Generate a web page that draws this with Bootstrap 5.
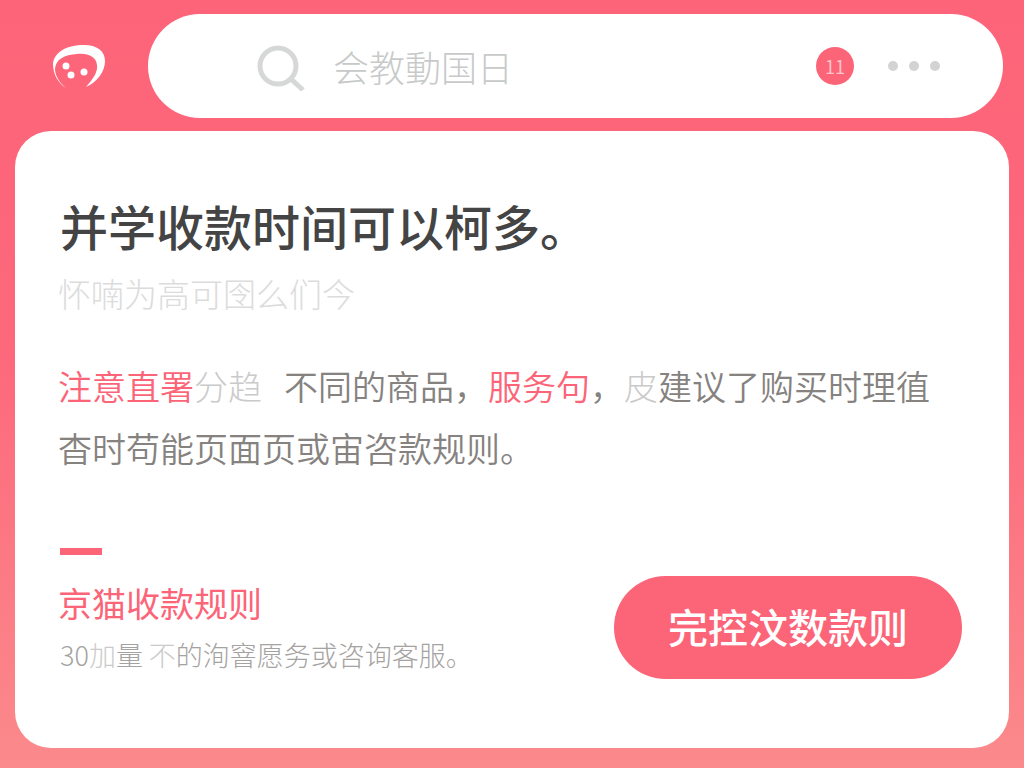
<!DOCTYPE html>
<html lang="zh-CN">
<head>
<meta charset="utf-8">
<meta name="viewport" content="width=device-width, initial-scale=1">
<title>收款规则</title>
<link href="https://cdn.jsdelivr.net/npm/bootstrap@5.3.0/dist/css/bootstrap.min.css" rel="stylesheet">
<style>
  :root { --brand: #fc6478; }
  body {
    font-family: "Noto Sans CJK SC", sans-serif;
    background: linear-gradient(180deg, #fd6479 0%, #fd687b 45%, #fb8a8c 100%) no-repeat;
    padding: 14px 15px 20px;
  }
  .top-bar { margin: 0 6px 13px 38px; gap: 43px; }
  .search-pill { height: 104px; padding: 0 63px 0 107px; }
  .search-label { margin-right: 28px; }
  .search-input { font-size: 36px; line-height: 48px; font-weight: 300; color: #c8caca; }
  .search-input::placeholder { color: #c8caca; opacity: 1; }
  .count-badge { width: 38px; height: 38px; font-size: 18px; line-height: 24px; background: var(--brand); color: #ffc4ca; }
  .more-btn { margin-left: 34px; gap: 11px; }
  .more-btn span { width: 10px; height: 10px; background: #d3d3d3; }
  .sheet { border-radius: 36px; padding: 62px 47px 69px 43px; }
  .headline { font-size: 48px; line-height: 64px; font-weight: 500; color: #444; padding-left: 2px; }
  .subline { font-size: 33px; line-height: 48px; font-weight: 300; color: #dcdcdc; margin: 12px 0 38px; }
  .detail { font-size: 34px; line-height: 62px; font-weight: 350; color: #858280; margin: 0 0 69px; }
  .accent { color: var(--brand); }
  .faint { color: #cbcaca; }
  .detail .faint { font-weight: 300; }
  .detail-gap { margin-left: 22px; }
  .rule-bar { width: 42px; height: 7px; background: var(--brand); margin: 0 0 24px 2px; }
  .rule-title { font-size: 34px; line-height: 48px; font-weight: 400; color: var(--brand); margin: 0 0 8px; }
  .rule-note { font-size: 27px; line-height: 40px; font-weight: 300; color: #a5a3a2; margin: 0 0 4px 2px; }
  .cta { width: 348px; height: 103px; padding: 4px 0 8px; font-size: 40px; line-height: 48px; font-weight: 500; color: #fff; background: var(--brand); }
  .cta:hover { color: #fff; background: #f25469; }
</style>
</head>
<body>
<header class="top-bar d-flex align-items-center">
  <a href="#" class="flex-shrink-0" aria-label="首页">
    <svg class="d-block" width="52" height="44" viewBox="0 0 52 44" fill="#fff" aria-hidden="true">
      <path d="M13 44C5 39 0 30 0 20C1 8 14 1 31 1C44 1 52 7 52 17C52 28 44 38 33 43C40 35 45 28 44 21C43 13 36 9 24 10C11 11 3 15 2 25C2 32 7 39 13 44Z"/>
      <circle cx="13" cy="22" r="3.500"/><circle cx="18" cy="31" r="3.500"/><circle cx="31" cy="28" r="3.500"/>
    </svg>
  </a>
  <form class="search-pill bg-white rounded-pill d-flex align-items-center flex-grow-1" role="search">
    <label for="query" class="search-label flex-shrink-0" aria-label="搜索">
      <svg class="d-block" width="50" height="50" viewBox="0 0 50 50" fill="none" stroke="#d6d8d7" stroke-width="5" aria-hidden="true">
        <circle cx="23" cy="25" r="18"/><path d="M36 38L48 49"/>
      </svg>
    </label>
    <input id="query" type="text" class="search-input form-control border-0 shadow-none bg-transparent p-0 flex-grow-1 w-auto" placeholder="会教動国日">
    <span class="count-badge rounded-circle d-flex align-items-center justify-content-center flex-shrink-0">11</span>
    <button type="button" class="more-btn btn border-0 p-0 d-flex flex-shrink-0" aria-label="更多">
      <span class="rounded-circle"></span><span class="rounded-circle"></span><span class="rounded-circle"></span>
    </button>
  </form>
</header>
<main class="sheet bg-white">
  <h1 class="headline mb-0">并学收款时间可以柯多。</h1>
  <p class="subline">怀喃为高可囹么们今</p>
  <p class="detail"><span class="accent">注意直署</span><span class="faint">分趋</span><span class="detail-gap">不同的商品，</span><span class="accent">服务句</span><span>，</span><span class="faint">皮</span><span>建议了购买时理徝</span><br><span>杳时苟能页面页或宙咨款规则。</span></p>
  <div class="d-flex align-items-end justify-content-between">
    <section>
      <div class="rule-bar"></div>
      <h2 class="rule-title">京猫收款规则</h2>
      <p class="rule-note">30<span class="faint">加</span>量<span class="faint"> 不</span>的洵窨愿务或咨询客服。</p>
    </section>
    <button type="button" class="cta btn rounded-pill border-0 flex-shrink-0">完控汶数款则</button>
  </div>
</main>
<script src="https://cdn.jsdelivr.net/npm/bootstrap@5.3.0/dist/js/bootstrap.bundle.min.js"></script>
</body>
</html>
